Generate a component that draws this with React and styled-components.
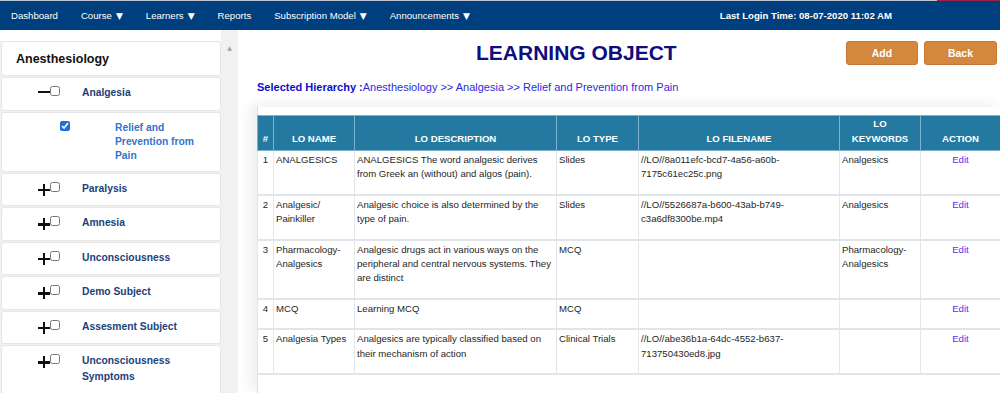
import React from 'react'
import styled, { createGlobalStyle } from 'styled-components'

const GlobalStyle = createGlobalStyle`
  html, body {
    margin: 0;
    padding: 0;
    background: #fff;
  }
  body {
    font-family: "Liberation Sans", Arial, sans-serif;
    overflow: hidden;
  }
  #root {
    width: 1000px;
    height: 393px;
    overflow: hidden;
  }
`

const NavBar = styled.nav`
  height: 30px;
  box-sizing: border-box;
  padding-top: 1px;
  display: flex;
  align-items: center;
  background: linear-gradient(to right, #b9c3d2 937px, #9b2342 937px) top left / 100% 1px no-repeat, #003f7e;
  color: #fff;
  font-size: 9.6px;
`
const NavItem = styled.span`
  padding: 0 11.5px;
  white-space: nowrap;
  &:first-child {
    padding-left: 11px;
  }
`
const Caret = styled.span`
  font-family: "DejaVu Sans", sans-serif;
  font-size: 9px;
  margin-left: 4px;
`
const LastLogin = styled.span`
  margin-left: auto;
  margin-right: 108px;
  font-weight: bold;
  white-space: nowrap;
`

const Layout = styled.div`
  display: flex;
  height: 363px;
`
const Sidebar = styled.aside`
  width: 238px;
  flex-shrink: 0;
  display: flex;
`
const TreeList = styled.div`
  width: 221px;
  margin-top: 11px;
  padding-left: 1px;
  box-sizing: border-box;
  display: flex;
  flex-direction: column;
  gap: 1px;
  background: #f1f1f1;
  overflow: hidden;
`
const TreeHead = styled.div`
  height: 35px;
  box-sizing: border-box;
  background: #fff;
  border: 1px solid #e6e6e6;
  border-radius: 3px;
  display: flex;
  align-items: center;
  padding-left: 14px;
  font-size: 12.5px;
  font-weight: bold;
  color: #111;
  flex-shrink: 0;
`
const TreeNode = styled.div`
  background: #fff;
  border: 1px solid #e6e6e6;
  border-radius: 3px;
  display: flex;
  align-items: flex-start;
  padding: 7px 0 ${p => (p.$child ? '8px' : '8.5px')} ${p => p.$indent}px;
  flex-shrink: 0;
`
const Toggle = styled.span`
  position: relative;
  width: 12px;
  height: 12px;
  margin-top: ${p => (p.$open ? '1px' : '3px')};
  flex-shrink: 0;
  &::before {
    content: '';
    position: absolute;
    left: 0;
    right: 0;
    top: 5px;
    height: ${p => (p.$open ? '2px' : '2.6px')};
    background: #111;
  }
  &::after {
    content: '';
    display: ${p => (p.$open ? 'none' : 'block')};
    position: absolute;
    top: 0;
    bottom: 0;
    left: 4.7px;
    width: 2.6px;
    background: #111;
  }
`
const Check = styled.input.attrs({ type: 'checkbox', readOnly: true })`
  width: 10px;
  height: 10px;
  margin: 1px ${p => p.$gap}px 0 0;
  flex-shrink: 0;
  accent-color: #1a6fdc;
`
const NodeLabel = styled.span`
  font-size: 10.3px;
  font-weight: bold;
  line-height: ${p => (p.$child ? '14px' : '16px')};
  color: ${p => (p.$child ? '#3573cc' : '#1c3f7c')};
  width: ${p => (p.$child ? '82px' : 'auto')};
  margin-top: ${p => (p.$child ? '1px' : '0')};
`
const ScrollTrack = styled.div`
  width: 17px;
  background: #f1f1f1;
  color: #a3a3a3;
  font-family: "DejaVu Sans", sans-serif;
  font-size: 6px;
  text-align: center;
  padding-top: 14px;
  box-sizing: border-box;
`

const Main = styled.main`
  flex: 1;
  min-width: 0;
  display: flex;
  flex-direction: column;
`
const TitleRow = styled.div`
  display: flex;
  align-items: center;
  padding-top: 11px;
  height: 24px;
`
const Title = styled.h1`
  margin: 0 0 0 238px;
  font-size: 21px;
  line-height: 24px;
  font-weight: bold;
  color: #0e0e7c;
  white-space: nowrap;
`
const Buttons = styled.div`
  margin-left: auto;
  margin-right: 3px;
  display: flex;
  gap: 6px;
`
const Button = styled.button`
  width: ${p => p.$w}px;
  height: 24px;
  background: #d3883d;
  border: 1px solid #c47a32;
  border-radius: 3px;
  color: #fff;
  font-family: "Liberation Sans", Arial, sans-serif;
  font-size: 10.5px;
  font-weight: bold;
  padding: 0;
`
const Hierarchy = styled.p`
  margin: 15px 0 0 19px;
  font-size: 11px;
  line-height: 14px;
  color: #2b2be0;
  white-space: nowrap;
  b {
    color: #0c0cd0;
  }
`
const Card = styled.section`
  flex: 1;
  margin: 13px 0 0 19px;
  padding-top: 8px;
  background: #fff;
  border-left: 1px solid #dcdfe3;
  box-shadow: -7px -3px 12px rgba(0, 0, 0, 0.07);
`
const Table = styled.table`
  width: 743px;
  margin-left: -1px;
  table-layout: fixed;
  border-collapse: collapse;
  font-size: 9.6px;
  line-height: 14.4px;
  color: #262626;
`
const Th = styled.th`
  background: #2479a0;
  color: #fff;
  font-weight: bold;
  text-align: center;
  vertical-align: bottom;
  height: 35px;
  box-sizing: border-box;
  padding: 0 2px 4px;
  border: 1px solid #7fb2cf;
`
const Td = styled.td`
  vertical-align: top;
  text-align: ${p => p.$align || 'left'};
  padding: 2px 2px 12px;
  border-left: 1px solid #e3e6ea;
  border-right: 1px solid #e3e6ea;
  border-bottom: 2px solid #e1e5ea;
  word-wrap: break-word;
`
const EditLink = styled.a`
  color: #5533ee;
  text-decoration: none;
`

const tree = [
  { label: 'Paralysis' },
  { label: 'Amnesia' },
  { label: 'Unconsciousness' },
  { label: 'Demo Subject' },
  { label: 'Assesment Subject' },
  { label: 'Unconsciousness Symptoms' },
]

const rows = [
  {
    name: 'ANALGESICS',
    desc: 'ANALGESICS The word analgesic derives from Greek an (without) and algos (pain).',
    type: 'Slides',
    file: '//LO//8a011efc-bcd7-4a56-a60b-7175c61ec25c.png',
    keys: 'Analgesics',
  },
  {
    name: <>Analgesic/<wbr />Painkiller</>,
    desc: 'Analgesic choice is also determined by the type of pain.',
    type: 'Slides',
    file: '//LO//5526687a-b600-43ab-b749-c3a6df8300be.mp4',
    keys: 'Analgesics',
  },
  {
    name: 'Pharmacology-Analgesics',
    desc: 'Analgesic drugs act in various ways on the peripheral and central nervous systems. They are distinct',
    type: 'MCQ',
    file: '',
    keys: 'Pharmacology-Analgesics',
  },
  { name: 'MCQ', desc: 'Learning MCQ', type: 'MCQ', file: '', keys: '' },
  {
    name: 'Analgesia Types',
    desc: 'Analgesics are typically classified based on their mechanism of action',
    type: 'Clinical Trials',
    file: '//LO//abe36b1a-64dc-4552-b637-713750430ed8.jpg',
    keys: '',
  },
]

const App = () => {
  return (
    <>
      <GlobalStyle />
      <NavBar>
        <NavItem>Dashboard</NavItem>
        <NavItem>Course<Caret>▼</Caret></NavItem>
        <NavItem>Learners<Caret>▼</Caret></NavItem>
        <NavItem>Reports</NavItem>
        <NavItem>Subscription Model<Caret>▼</Caret></NavItem>
        <NavItem>Announcements<Caret>▼</Caret></NavItem>
        <LastLogin>Last Login Time: 08-07-2020 11:02 AM</LastLogin>
      </NavBar>
      <Layout>
        <Sidebar>
          <TreeList>
            <TreeHead>Anesthesiology</TreeHead>
            <TreeNode $indent={36}>
              <Toggle $open />
              <Check $gap={22} />
              <NodeLabel>Analgesia</NodeLabel>
            </TreeNode>
            <TreeNode $indent={58} $child>
              <Check $gap={45} defaultChecked />
              <NodeLabel $child>Relief and Prevention from Pain</NodeLabel>
            </TreeNode>
            {tree.map(n => (
              <TreeNode key={n.label} $indent={36}>
                <Toggle />
                <Check $gap={22} />
                <NodeLabel>{n.label}</NodeLabel>
              </TreeNode>
            ))}
          </TreeList>
          <ScrollTrack>▲</ScrollTrack>
        </Sidebar>
        <Main>
          <TitleRow>
            <Title>LEARNING OBJECT</Title>
            <Buttons>
              <Button $w={72}>Add</Button>
              <Button $w={73}>Back</Button>
            </Buttons>
          </TitleRow>
          <Hierarchy>
            <b>Selected Hierarchy :</b>Anesthesiology &gt;&gt; Analgesia &gt;&gt; Relief and Prevention from Pain
          </Hierarchy>
          <Card>
            <Table>
              <colgroup>
                <col style={{ width: 16 }} />
                <col style={{ width: 81 }} />
                <col style={{ width: 202 }} />
                <col style={{ width: 82 }} />
                <col style={{ width: 201 }} />
                <col style={{ width: 81 }} />
                <col style={{ width: 80 }} />
              </colgroup>
              <thead>
                <tr>
                  <Th>#</Th>
                  <Th>LO NAME</Th>
                  <Th>LO DESCRIPTION</Th>
                  <Th>LO TYPE</Th>
                  <Th>LO FILENAME</Th>
                  <Th>LO<br />KEYWORDS</Th>
                  <Th>ACTION</Th>
                </tr>
              </thead>
              <tbody>
                {rows.map((r, i) => (
                  <tr key={i}>
                    <Td $align="center">{i + 1}</Td>
                    <Td>{r.name}</Td>
                    <Td>{r.desc}</Td>
                    <Td>{r.type}</Td>
                    <Td>{r.file}</Td>
                    <Td>{r.keys}</Td>
                    <Td $align="center"><EditLink href="#">Edit</EditLink></Td>
                  </tr>
                ))}
              </tbody>
            </Table>
          </Card>
        </Main>
      </Layout>
    </>
  )
}

export default App
